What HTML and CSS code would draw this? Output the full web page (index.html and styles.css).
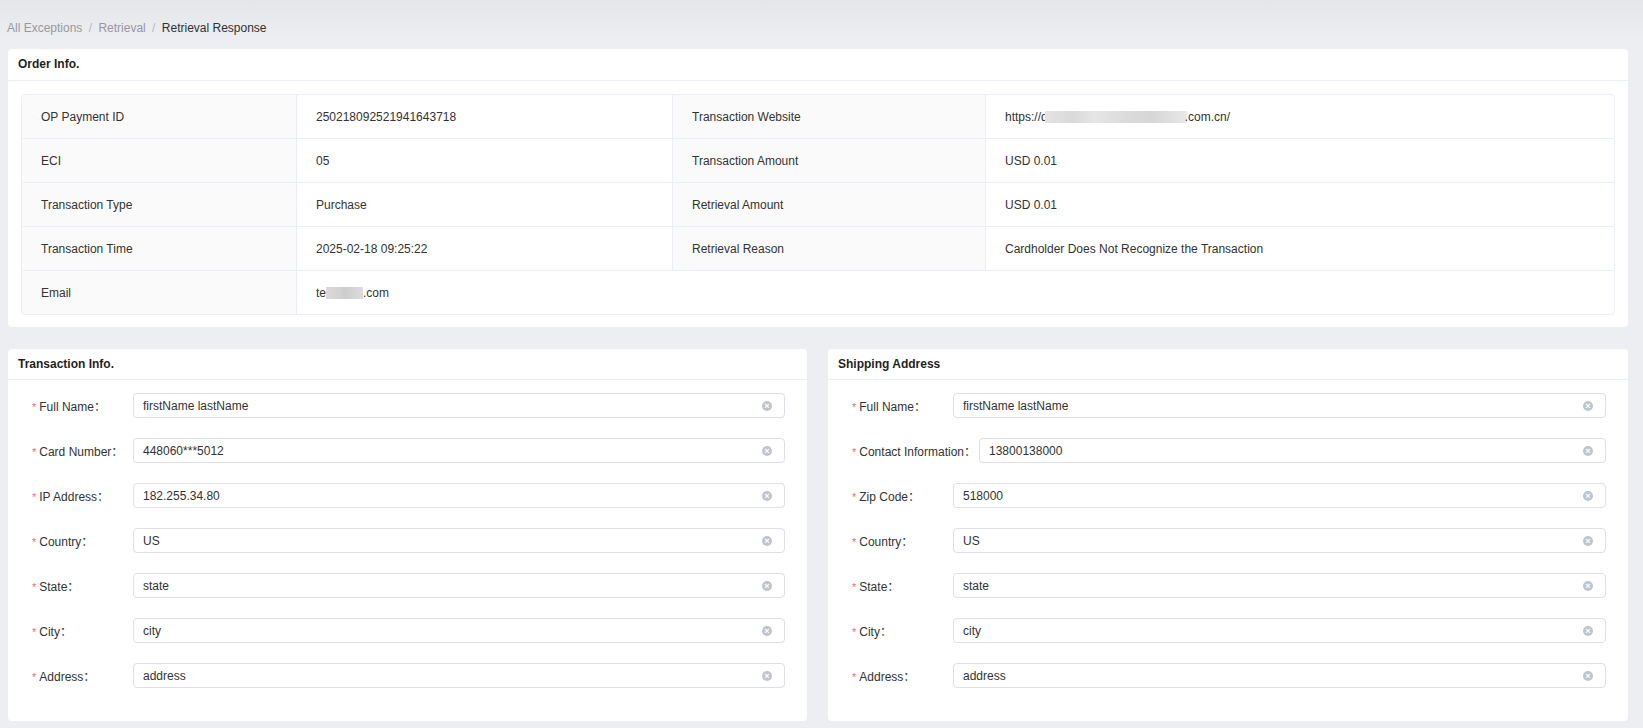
FILE: index.html
```html
<!DOCTYPE html>
<html>
<head>
  <meta charset="utf-8">
  <link rel="stylesheet" href="styles.css">
</head>
<body>
  <div class="page">
    <div class="breadcrumb">
      <span class="crumb">All Exceptions</span>
      <span class="sep">/</span>
      <span class="crumb crumb-link">Retrieval</span>
      <span class="sep">/</span>
      <span class="crumb crumb-current">Retrieval Response</span>
    </div>

    <div class="card">
      <div class="card-header card-header-tall">Order Info.</div>
      <div class="card-body order-body">
        <div class="info-grid">
          <div class="cell label">OP Payment ID</div>
          <div class="cell">250218092521941643718</div>
          <div class="cell label">Transaction Website</div>
          <div class="cell">https://d<span class="blur blur-site"></span>.com.cn/</div>

          <div class="cell label">ECI</div>
          <div class="cell">05</div>
          <div class="cell label">Transaction Amount</div>
          <div class="cell">USD 0.01</div>

          <div class="cell label">Transaction Type</div>
          <div class="cell">Purchase</div>
          <div class="cell label">Retrieval Amount</div>
          <div class="cell">USD 0.01</div>

          <div class="cell label">Transaction Time</div>
          <div class="cell">2025-02-18 09:25:22</div>
          <div class="cell label">Retrieval Reason</div>
          <div class="cell">Cardholder Does Not Recognize the Transaction</div>

          <div class="cell label">Email</div>
          <div class="cell wide">te<span class="blur blur-mail"></span>.com</div>
        </div>
      </div>
    </div>

    <div class="columns">
      <div class="card">
        <div class="card-header">Transaction Info.</div>
        <div class="card-body form">
          <div class="form-item">
            <label class="form-label"><i>*</i>Full Name：</label>
            <div class="input"><span>firstName lastName</span><b class="clear">×</b></div>
          </div>
          <div class="form-item">
            <label class="form-label"><i>*</i>Card Number：</label>
            <div class="input"><span>448060***5012</span><b class="clear">×</b></div>
          </div>
          <div class="form-item">
            <label class="form-label"><i>*</i>IP Address：</label>
            <div class="input"><span>182.255.34.80</span><b class="clear">×</b></div>
          </div>
          <div class="form-item">
            <label class="form-label"><i>*</i>Country：</label>
            <div class="input"><span>US</span><b class="clear">×</b></div>
          </div>
          <div class="form-item">
            <label class="form-label"><i>*</i>State：</label>
            <div class="input"><span>state</span><b class="clear">×</b></div>
          </div>
          <div class="form-item">
            <label class="form-label"><i>*</i>City：</label>
            <div class="input"><span>city</span><b class="clear">×</b></div>
          </div>
          <div class="form-item">
            <label class="form-label"><i>*</i>Address：</label>
            <div class="input"><span>address</span><b class="clear">×</b></div>
          </div>
        </div>
      </div>

      <div class="card">
        <div class="card-header">Shipping Address</div>
        <div class="card-body form">
          <div class="form-item">
            <label class="form-label"><i>*</i>Full Name：</label>
            <div class="input"><span>firstName lastName</span><b class="clear">×</b></div>
          </div>
          <div class="form-item">
            <label class="form-label"><i>*</i>Contact Information：</label>
            <div class="input"><span>13800138000</span><b class="clear">×</b></div>
          </div>
          <div class="form-item">
            <label class="form-label"><i>*</i>Zip Code：</label>
            <div class="input"><span>518000</span><b class="clear">×</b></div>
          </div>
          <div class="form-item">
            <label class="form-label"><i>*</i>Country：</label>
            <div class="input"><span>US</span><b class="clear">×</b></div>
          </div>
          <div class="form-item">
            <label class="form-label"><i>*</i>State：</label>
            <div class="input"><span>state</span><b class="clear">×</b></div>
          </div>
          <div class="form-item">
            <label class="form-label"><i>*</i>City：</label>
            <div class="input"><span>city</span><b class="clear">×</b></div>
          </div>
          <div class="form-item">
            <label class="form-label"><i>*</i>Address：</label>
            <div class="input"><span>address</span><b class="clear">×</b></div>
          </div>
        </div>
      </div>
    </div>
  </div>
</body>
</html>
```

FILE: styles.css
```css
body {
  margin: 0;
  font-family: "Liberation Sans", "Noto Sans CJK SC", Arial, sans-serif;
  font-size: 12px;
  color: #333;
  background: linear-gradient(180deg, #e5e6ea 0px, #eceef2 40px, #eceef2 100%);
  height: 728px;
  overflow: hidden;
}

.page {
  padding: 0 15px 0 8px;
}

/* breadcrumb */
.breadcrumb {
  height: 18px;
  line-height: 18px;
  padding: 19px 0 12px 0;
  margin-left: -1px;
}

.crumb {
  color: #999;
}

.crumb-link {
  color: #9a94a3;
}

.crumb-current {
  color: #303133;
}

.sep {
  color: #b4b7be;
  margin: 0 3px;
}

/* cards */
.card {
  background: #fff;
  border-radius: 4px;
}

.card-header {
  height: 30px;
  line-height: 31px;
  padding: 0 10px;
  font-weight: 700;
  color: #1f1f1f;
  border-bottom: 1px solid #ebeef5;
}

.card-header-tall {
  height: 31px;
}

.order-body {
  padding: 13px 13px 12px;
}

/* order info grid */
.info-grid {
  display: grid;
  grid-template-columns: 275px 376px 313px 1fr;
  border: 1px solid #ebeef5;
  border-radius: 4px;
  overflow: hidden;
}

.cell {
  box-sizing: border-box;
  height: 44px;
  padding: 0 19px;
  display: flex;
  align-items: center;
  border-right: 1px solid #ebeef5;
  border-bottom: 1px solid #ebeef5;
  color: #333;
  white-space: nowrap;
}

.cell:nth-child(4n) {
  border-right: none;
}

.cell.label {
  background: #fafafa;
}

.cell.wide {
  grid-column: span 3;
  border-right: none;
}

.info-grid > .cell:nth-last-child(-n+2) {
  border-bottom: none;
  height: 43px;
}

.blur {
  display: inline-block;
  height: 12px;
  background: linear-gradient(90deg, #e4e4e4 0%, #d9d9d9 20%, #e6e6e6 35%, #dcdcdc 55%, #d6d6d6 75%, #e8e8e8 100%);
}

.blur-site {
  width: 142px;
  margin: 1px -2px 0 -3px;
}

.blur-mail {
  width: 37px;
  background: linear-gradient(90deg, #dadada 0%, #d3d3d3 35%, #cdcdcd 50%, #d6d6d6 80%, #dcdcdc 100%);
}

/* two columns */
.columns {
  display: grid;
  grid-template-columns: 799px 1fr;
  gap: 21px;
  margin-top: 22px;
}

.form {
  padding: 13px 22px 13px 24px;
}

.form-item {
  display: flex;
  align-items: center;
  margin-bottom: 20px;
}

.form-label {
  flex: 0 0 auto;
  min-width: 101px;
  box-sizing: border-box;
  padding-right: 3px;
  color: #333;
  white-space: nowrap;
}

.form-label i {
  font-style: normal;
  color: #f56c6c;
  margin-right: 3px;
  font-size: 11px;
}

.input {
  flex: 1;
  box-sizing: border-box;
  height: 25px;
  border: 1px solid #dcdfe6;
  border-radius: 4px;
  padding: 0 12px 0 9px;
  display: flex;
  align-items: center;
  justify-content: space-between;
  color: #333;
}

.clear {
  width: 10px;
  height: 10px;
  border-radius: 50%;
  background: #c0c4cc;
  color: #fff;
  font-size: 9px;
  font-weight: 700;
  line-height: 10px;
  text-align: center;
}
```
